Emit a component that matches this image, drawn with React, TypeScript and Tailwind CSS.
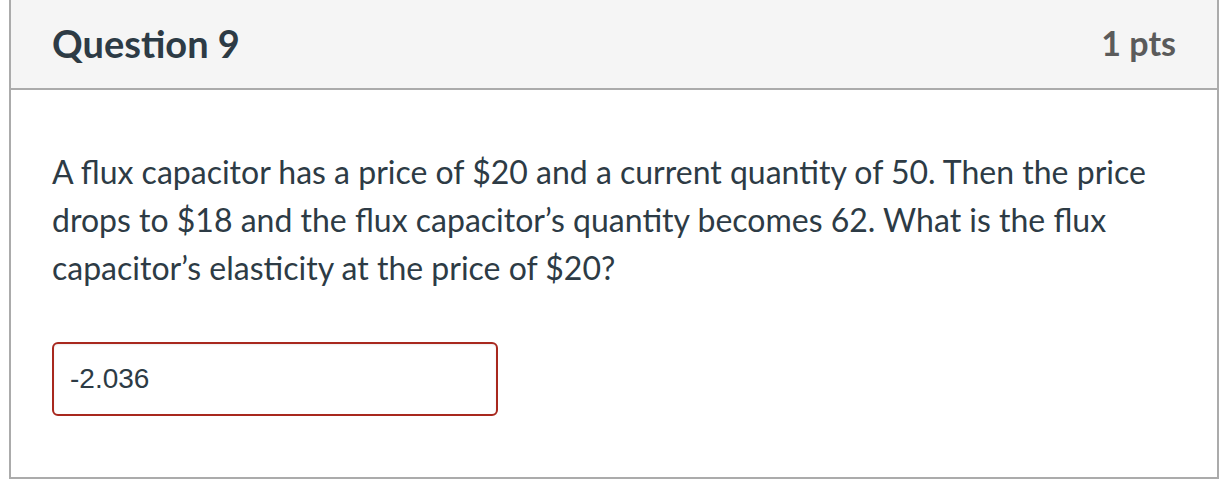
import { useState } from 'react';

export default function App() {
  const [respuesta, setRespuesta] = useState('-2.036');

  return (
    <div className="w-[1226px] h-[494px] bg-white">
      <div className="ml-[9px] w-[1210px] h-[479px] border-x-2 border-b-2 border-[#ababab] flex flex-col">
        {/* Header */}
        <div className="h-[90px] bg-[#f5f5f5] border-b-2 border-[#ababab] flex items-center justify-between px-[41px] pb-[2px]" style={{ fontFamily: 'Lato, "Noto Sans", sans-serif' }}>
          <h2 className="text-[38px] font-bold text-[#2d3b45] leading-none">Question 9</h2>
          <span className="text-[34px] font-bold text-[#5b5b5b] leading-none">1 pts</span>
        </div>

        {/* Body */}
        <div className="flex-1 px-[41px] pt-[58px]">
          <p
            className="text-[32px] leading-[48px] text-[#2d3b45]"
            style={{ fontFamily: 'Lato, "Noto Sans", sans-serif' }}
          >
            A flux capacitor has a price of $20 and a current quantity of 50. Then the price drops to $18 and the flux capacitor’s quantity becomes 62. What is the flux capacitor’s elasticity at the price of $20?
          </p>
          <input
            type="text"
            value={respuesta}
            onChange={e => setRespuesta(e.target.value)}
            className="mt-[50px] block w-[446px] h-[74px] border-2 border-[#a8281e] rounded-[6px] px-[16px] text-[28px] text-[#2d3b45] outline-none bg-white shadow-[inset_0_1px_2px_rgba(0,0,0,0.08)]"
            style={{ fontFamily: '"Liberation Sans", Arial, sans-serif' }}
          />
        </div>
      </div>
    </div>
  );
}
